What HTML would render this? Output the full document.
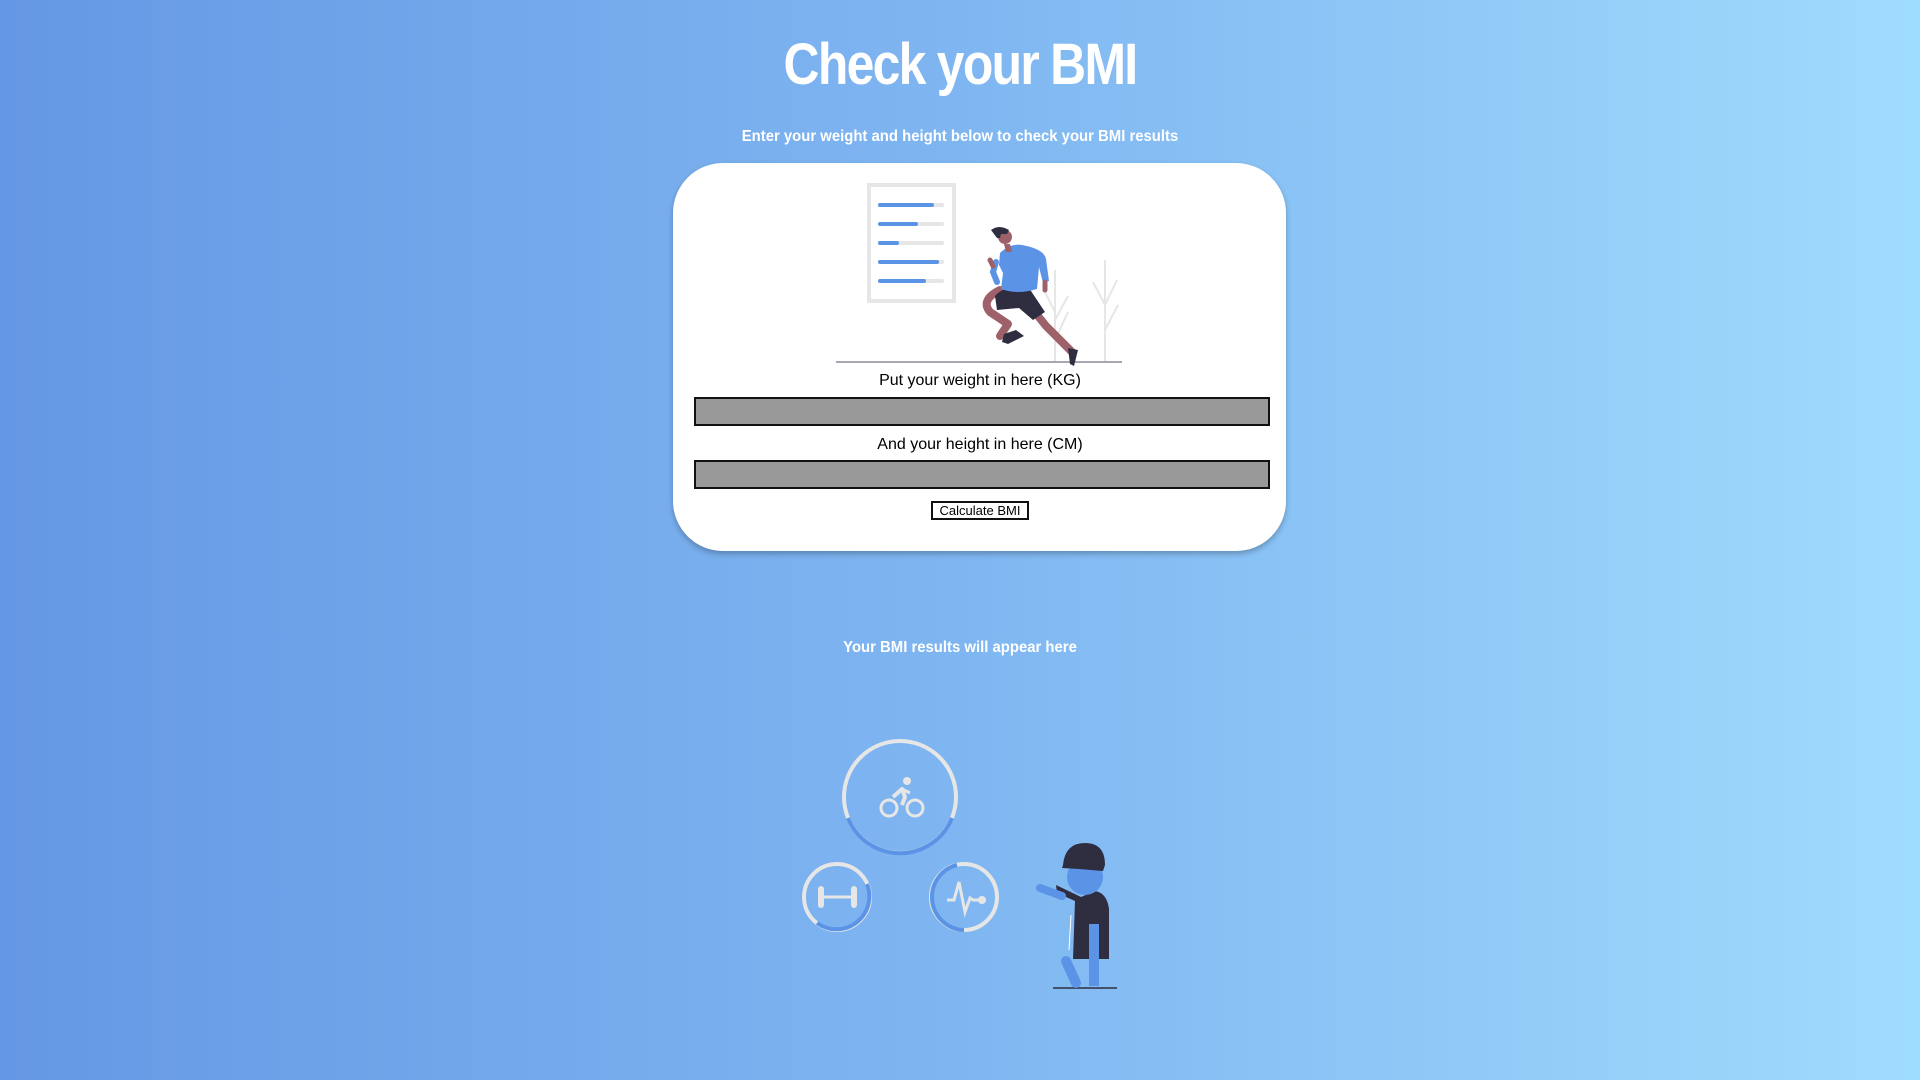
<!DOCTYPE html>
<html><head><meta charset="utf-8"><style>
html,body{margin:0;padding:0}
body{width:1920px;height:1080px;overflow:hidden;position:relative;background:linear-gradient(to right,#6598e4,#7fb6f1 50%,#9fdcfd);font-family:"Liberation Sans",sans-serif}
.a{position:absolute}
h1{position:absolute;left:0;width:1920px;top:28px;margin:0;text-align:center;color:#fff;font-size:58px;font-weight:bold;letter-spacing:-2px;line-height:74px;transform:scaleX(.86)}
.sub{left:0;width:1920px;top:127px;text-align:center;color:#fff;font-size:16px;font-weight:bold;line-height:20px;transform:scaleX(.93)}
.card{left:673px;top:163px;width:613px;height:388px;background:#fff;border-radius:50px;box-shadow:0 3px 6px rgba(0,0,0,.25)}
.lbl{left:674px;width:612px;text-align:center;font-size:16px;color:#000;line-height:20px}
.inp{left:694px;width:572px;height:25px;background:#999;border:2px solid #111}
.btn{left:931px;top:501px;width:94px;height:15px;border:2px solid #111;background:#fff;font-size:13px;text-align:center;line-height:15px}
.res{left:0;width:1920px;top:638px;text-align:center;color:#fff;font-size:16px;font-weight:bold;line-height:20px;transform:scaleX(.93)}
</style></head><body>
<h1>Check your BMI</h1>
<div class="a sub">Enter your weight and height below to check your BMI results</div>
<div class="a card"></div>
<svg class="a" style="left:673px;top:163px" width="613" height="210" viewBox="673 163 613 210">
<rect x="869" y="185" width="85" height="116" fill="#fff" stroke="#e6e6e6" stroke-width="4"/>
<g stroke-width="4" stroke-linecap="round">
<line x1="880" y1="205" x2="942" y2="205" stroke="#e6e6e6"/><line x1="880" y1="205" x2="932" y2="205" stroke="#5b93e6"/>
<line x1="880" y1="224" x2="942" y2="224" stroke="#e6e6e6"/><line x1="880" y1="224" x2="916" y2="224" stroke="#5b93e6"/>
<line x1="880" y1="243" x2="942" y2="243" stroke="#e6e6e6"/><line x1="880" y1="243" x2="897" y2="243" stroke="#5b93e6"/>
<line x1="880" y1="262" x2="942" y2="262" stroke="#e6e6e6"/><line x1="880" y1="262" x2="937" y2="262" stroke="#5b93e6"/>
<line x1="880" y1="281" x2="942" y2="281" stroke="#e6e6e6"/><line x1="880" y1="281" x2="924" y2="281" stroke="#5b93e6"/>
</g>
<g stroke="#e6e6e6" stroke-width="2" fill="none">
<line x1="1055" y1="270" x2="1055" y2="362"/><path d="M1055 320 L1068 296 M1055 340 L1068 312 M1055 312 L1045 292"/>
<line x1="1105" y1="260" x2="1105" y2="362"/><path d="M1105 305 L1117 280 M1105 330 L1118 305 M1105 305 L1093 282"/>
</g>
<line x1="836" y1="362" x2="1122" y2="362" stroke="#8a8a9a" stroke-width="1.5"/>
<!-- runner -->
<path d="M1000 290 q-20 10 -10 22 l18 12 l-8 12" stroke="#9e616a" stroke-width="8" fill="none" stroke-linecap="round" stroke-linejoin="round"/>
<path d="M1030 306 l16 20 l26 26" stroke="#9e616a" stroke-width="8" fill="none" stroke-linecap="round"/>
<path d="M1004 334 l12 -4 l8 6 l-16 8 l-6 -2z" fill="#2f2e41"/>
<path d="M1068 348 l10 2 l-4 16 l-4 -2z" fill="#2f2e41"/>
<path d="M995 296 q10 -12 34 -8 l16 24 l-12 8 l-14 -12 l-22 2z" fill="#2f2e41"/>
<path d="M1000 253 q10 -10 22 -8 q22 4 24 14 l3 22 l-6 2 l-4 -16 l-2 22 q-20 6 -36 0 l2 -16 l-4 -8z" fill="#5b93e6"/>
<path d="M996 262 l-3 10 l4 10" stroke="#5b93e6" stroke-width="6" fill="none" stroke-linecap="round"/>
<path d="M993 266 l-3 -6" stroke="#9e616a" stroke-width="5" stroke-linecap="round"/>
<path d="M1045 282 l0 8" stroke="#9e616a" stroke-width="5" stroke-linecap="round"/>
<path d="M1004 244 l2 8 l6 0 l-2 -8z" fill="#9e616a"/>
<circle cx="1005" cy="237" r="7" fill="#9e616a"/>
<path d="M991 230 q8 -6 18 0 l-2 4 l-6 0 l-1 4 l-3 0z" fill="#2f2e41"/>
</svg>
<div class="a lbl" style="top:371px">Put your weight in here (KG)</div>
<div class="a inp" style="top:397px"></div>
<div class="a lbl" style="top:435px">And your height in here (CM)</div>
<div class="a inp" style="top:460px"></div>
<div class="a btn">Calculate BMI</div>
<div class="a res">Your BMI results will appear here</div>
<svg class="a" style="left:780px;top:720px" width="360" height="280" viewBox="780 720 360 280">
<g fill="none" stroke-width="4">
<circle cx="900" cy="797" r="56" stroke="#e6e6e6"/>
<path d="M848 818 A56 56 0 0 0 952 818" stroke="#5b93e6"/>
<circle cx="837" cy="897" r="33" stroke="#e6e6e6"/>
<path d="M867 884 A33 33 0 0 1 817 923" stroke="#5b93e6"/>
<circle cx="964" cy="897" r="33" stroke="#e6e6e6"/>
<path d="M964 930 A33 33 0 0 1 957 865" stroke="#5b93e6"/>
</g>
<g fill="none" stroke="#e6e6e6" stroke-width="3">
<circle cx="889" cy="808" r="8"/><circle cx="915" cy="808" r="8"/>
<path d="M893 797 l9 -8 l3 8 l-3 8" stroke-width="4" stroke-linejoin="round"/>
<path d="M902 789 l8 4" stroke-width="3"/>
<path d="M824 897 l27 0"/>
<path d="M947 900 l7 0 l5 -18 l6 30 l5 -14 l3 2 l8 0"/>
</g>
<circle cx="907" cy="781" r="4" fill="#e6e6e6"/>
<rect x="818" y="886" width="6" height="22" rx="3" fill="#e6e6e6"/><rect x="851" y="886" width="6" height="22" rx="3" fill="#e6e6e6"/>
<circle cx="982" cy="900" r="4" fill="#e6e6e6"/>
<line x1="1053" y1="988" x2="1117" y2="988" stroke="#2f2e41" stroke-width="1.5"/>
<path d="M1066 961 l10 22" stroke="#5b93e6" stroke-width="10" stroke-linecap="round"/>
<rect x="1089" y="960" width="10" height="26" fill="#5b93e6"/>
<path d="M1056 885 l25 12 l14 -6 q12 2 14 18 l0 50 l-36 0 l2 -58 l-18 -8z" fill="#2f2e41"/>
<path d="M1040 888 l22 8" stroke="#5b93e6" stroke-width="8" stroke-linecap="round"/>
<line x1="1071" y1="915" x2="1069" y2="950" stroke="#fff" stroke-width="1"/>
<rect x="1089" y="924" width="10" height="36" fill="#5b93e6"/>
<circle cx="1085" cy="877" r="18" fill="#5b93e6"/>
<path d="M1063 865 q2 -22 22 -22 q20 0 20 22 l-2 6 l-24 -2 l-17 -1z" fill="#2f2e41"/>
</svg>
</body></html>
